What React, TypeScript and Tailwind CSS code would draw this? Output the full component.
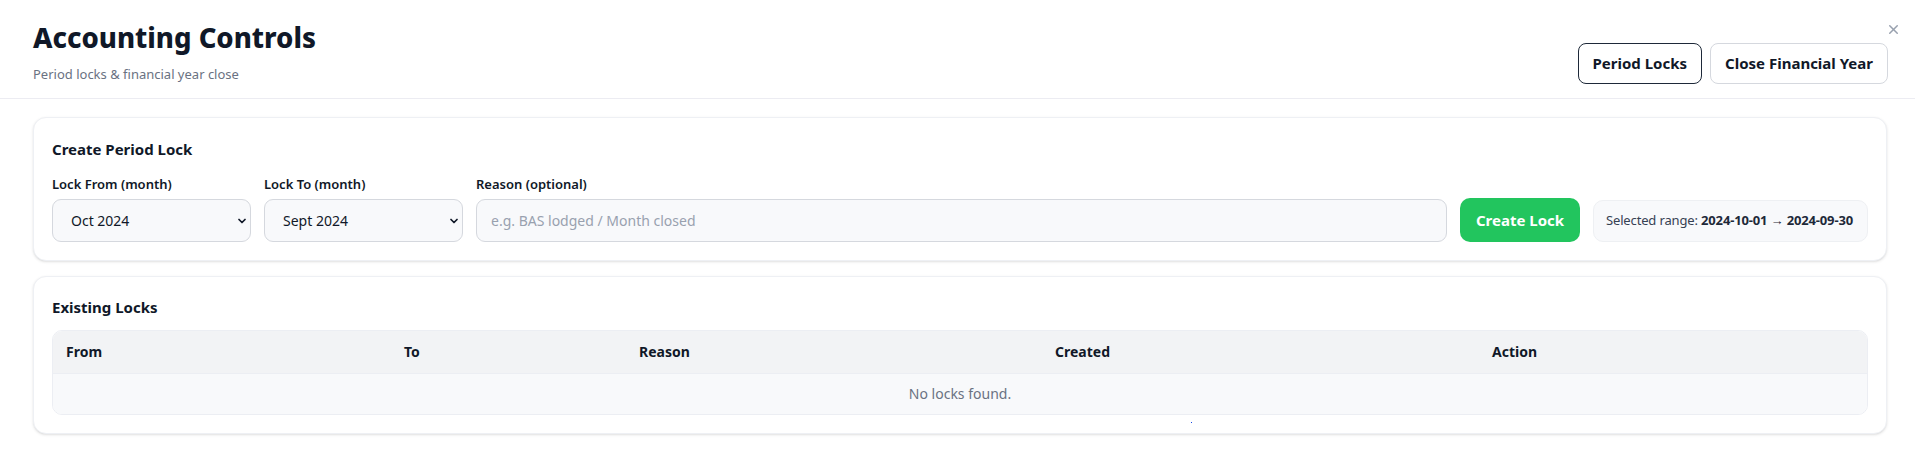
import React, { useState } from 'react';
import { ChevronDown, X } from 'lucide-react';

const font = { fontFamily: '"Noto Sans", "Open Sans", Arial, sans-serif' };

const MonthSelect: React.FC<{ value: string; options: string[]; onChange: (v: string) => void }> = ({ value, options, onChange }) => (
  <div className="relative w-[199px]">
    <select
      value={value}
      onChange={(e) => onChange(e.target.value)}
      className="h-[43px] w-full appearance-none rounded-[9px] border border-[#d5d8de] bg-[#f8f9fb] pl-[18px] pr-8 text-sm text-gray-900 outline-none"
    >
      {options.map((o) => (
        <option key={o}>{o}</option>
      ))}
    </select>
    <ChevronDown size={12} strokeWidth={3.5} className="pointer-events-none absolute right-[3px] top-1/2 -translate-y-1/2 text-gray-900" />
  </div>
);

const App: React.FC = () => {
  const [from, setFrom] = useState('Oct 2024');
  const [to, setTo] = useState('Sept 2024');
  const [reason, setReason] = useState('');
  const months = ['Jul 2024', 'Aug 2024', 'Sept 2024', 'Oct 2024', 'Nov 2024', 'Dec 2024'];

  return (
    <div className="relative min-h-[466px] bg-white" style={font}>
      {/* Header */}
      <div className="flex items-end justify-between border-b border-[#ececf2] pb-3.5 pl-[33px] pr-[27px] pt-5">
        <div>
          <h1 className="text-[27.5px] font-extrabold leading-9 text-gray-900">Accounting Controls</h1>
          <p className="mt-2 text-[13px] leading-5 text-gray-500">Period locks &amp; financial year close</p>
        </div>
        <div className="flex gap-2">
          <button className="h-[41px] rounded-lg border border-gray-800 px-3.5 text-[15px] font-bold text-gray-900">Period Locks</button>
          <button className="h-[41px] rounded-lg border border-[#d5d8de] px-3.5 text-[15px] font-bold text-gray-900">Close Financial Year</button>
        </div>
      </div>
      <button className="absolute right-[14px] top-[22px] text-gray-400" title="Close">
        <X size={15} strokeWidth={2.4} />
      </button>

      <div className="flex flex-col gap-[15px] pl-[33px] pr-[28px] pt-[18px]">
        {/* Create Period Lock */}
        <div className="rounded-[13px] border border-[#eef0f4] bg-white px-[18px] pb-[18px] pt-5 shadow-sm">
          <h2 className="text-[15px] font-bold leading-[22px] text-gray-900">Create Period Lock</h2>
          <div className="mt-[15px] flex items-end gap-[13px]">
            <div>
              <label className="mb-1.5 block text-[13px] font-semibold leading-[18px] text-gray-900">Lock From (month)</label>
              <MonthSelect value={from} options={months} onChange={setFrom} />
            </div>
            <div>
              <label className="mb-1.5 block text-[13px] font-semibold leading-[18px] text-gray-900">Lock To (month)</label>
              <MonthSelect value={to} options={months} onChange={setTo} />
            </div>
            <div className="flex-1">
              <label className="mb-1.5 block text-[13px] font-semibold leading-[18px] text-gray-900">Reason (optional)</label>
              <input
                value={reason}
                onChange={(e) => setReason(e.target.value)}
                placeholder="e.g. BAS lodged / Month closed"
                className="h-[43px] w-full rounded-[9px] border border-[#d5d8de] bg-[#f8f9fb] px-3.5 text-sm text-gray-900 outline-none placeholder:text-gray-400"
              />
            </div>
            <button className="h-[44px] w-[120px] rounded-[10px] bg-[#22c55e] text-[15px] font-bold text-white">Create Lock</button>
            <div className="flex h-[42px] w-[275px] items-center whitespace-nowrap rounded-[10px] border border-[#eef0f3] bg-[#f8f9fb] px-[12px] text-[13px] tracking-[-0.15px] text-gray-700">
              Selected range:&nbsp;<span className="font-bold text-gray-800">2024-10-01 → 2024-09-30</span>
            </div>
          </div>
        </div>

        {/* Existing Locks */}
        <div className="relative rounded-[13px] border border-[#eef0f4] bg-white px-[18px] pb-[18px] pt-[19px] shadow-sm">
          <h2 className="text-[15px] font-bold leading-[22px] text-gray-900">Existing Locks</h2>
          <div className="mt-3 overflow-hidden rounded-[10px] border border-[#eceef3]">
            <table className="w-full table-fixed border-collapse text-sm">
              <colgroup>
                <col className="w-[338px]" />
                <col className="w-[235px]" />
                <col className="w-[416px]" />
                <col className="w-[437px]" />
                <col />
              </colgroup>
              <thead className="bg-[#f2f3f5] text-gray-900">
                <tr className="h-[42px]">
                  <th className="px-[13px] text-left font-bold">From</th>
                  <th className="px-[13px] text-left font-bold">To</th>
                  <th className="px-[13px] text-left font-bold">Reason</th>
                  <th className="px-[13px] text-left font-bold">Created</th>
                  <th className="px-[13px] text-left font-bold">Action</th>
                </tr>
              </thead>
              <tbody className="bg-[#f8f9fb]">
                <tr className="h-[41px] border-t border-[#eceef3]">
                  <td colSpan={5} className="text-center text-gray-500">No locks found.</td>
                </tr>
              </tbody>
            </table>
          </div>
          <span className="absolute bottom-[10px] left-[1157px] h-px w-px bg-blue-700" />
        </div>
      </div>
    </div>
  );
};

export default App;
